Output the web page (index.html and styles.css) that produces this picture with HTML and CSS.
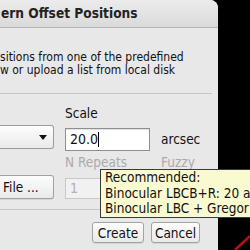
FILE: index.html
```html
<!DOCTYPE html>
<html lang="en">
  <head>
    <meta charset="UTF-8" />
    <title>Pattern Offset Positions</title>
    <link rel="stylesheet" href="styles.css">
  </head>
  <body>
    <div class="dialog">
      <div class="titlebar">ern Offset Positions</div>

      <p class="intro">sitions from one of the predefined<br>w or upload a list from local disk</p>
      <div class="sep"></div>

      <div class="form">
        <span></span>
        <label class="lbl">Scale</label>
        <span></span>

        <div class="combo">
          <svg class="arrow" width="8" height="5" viewBox="0 0 8 5"><polygon points="0,0 8,0 4,5" fill="#111"/></svg>
        </div>
        <div class="field">20.0<span class="caret"></span></div>
        <span class="unit">arcsec</span>

        <span></span>
        <label class="lbl off">N Repeats</label>
        <label class="lbl off">Fuzzy</label>

        <button class="btn file">File ...</button>
        <div class="field disabled">1</div>
        <span></span>
      </div>

      <div class="sep low"></div>

      <div class="actions">
        <button class="btn">Create</button>
        <button class="btn">Cancel</button>
      </div>

      <div class="tooltip">
        Recommended:<br>
        Binocular LBCB+R: 20 a<br>
        Binocular LBC + Gregor
      </div>
    </div>

    <svg class="cable" width="20" height="20" viewBox="0 0 20 20"><line x1="20" y1="6" x2="5" y2="20" stroke="#b3121c" stroke-width="2.5"/></svg>
  </body>
</html>
```

FILE: styles.css
```css
* {
  box-sizing: border-box;
  font-family: "DejaVu Sans Condensed", "DejaVu Sans", sans-serif;
  font-stretch: condensed;
}
body {
  margin: 0;
  width: 250px;
  height: 250px;
  overflow: hidden;
  background: #000;
  position: relative;
}
.dialog {
  position: relative;
  width: 218px;
  height: 250px;
  background: #e8e8e8;
  border-top-right-radius: 8px;
  color: #111;
}
.titlebar {
  height: 28px;
  line-height: 27px;
  padding-left: 1px;
  font-size: 13.6px;
  font-weight: bold;
  color: #222;
  background: linear-gradient(#ececec, #dadada);
  border-bottom: 1px solid #b4b4b4;
  border-top-right-radius: 8px;
}
.intro {
  margin: 0;
  padding-top: 23px;
  font-size: 12px;
  line-height: 13px;
  white-space: nowrap;
}
.sep {
  height: 1px;
  width: 212px;
  margin-top: 16px;
  background: #c6c6c6;
}
.sep.low {
  margin-top: 10px;
}
.form {
  display: grid;
  grid-template-columns: 54px 85px 1fr;
  grid-template-rows: 16px 26px 16px 24px;
  column-gap: 11px;
  row-gap: 4px;
  padding-top: 11px;
  font-size: 13.5px;
}
.lbl {
  line-height: 16px;
  white-space: nowrap;
}
.lbl.off {
  color: #ababab;
  line-height: 14px;
}
.combo {
  height: 24px;
  align-self: start;
  display: flex;
  align-items: center;
  justify-content: flex-end;
  padding-right: 6px;
  background: linear-gradient(#fefefe, #e9e9e9);
  border: 1px solid #9c9c9c;
  border-left: 0;
  border-radius: 0 3px 3px 0;
}
.field {
  height: 23px;
  align-self: end;
  padding-left: 4px;
  font-size: 14px;
  line-height: 21px;
  background: #fff;
  border: 1px solid #8f8f8f;
  box-shadow: inset 0 1px 1px rgba(0,0,0,0.12);
}
.caret {
  display: inline-block;
  width: 1px;
  height: 15px;
  background: #000;
  vertical-align: -3px;
}
.field.disabled {
  height: 21px;
  line-height: 19px;
  color: #b2b2b2;
  background: #f1f1f1;
  border-color: #c9c9c9;
  box-shadow: none;
}
.unit {
  align-self: center;
  line-height: 16px;
  padding-top: 2px;
}
.btn {
  height: 21px;
  padding: 0;
  font-size: 13.5px;
  color: #111;
  background: linear-gradient(#fdfdfd, #e9e9e9);
  border: 1px solid #a2a2a2;
  border-radius: 3px;
  box-shadow: 0 1px 0 rgba(0,0,0,0.08);
}
.btn.file {
  height: 24px;
  text-align: left;
  padding-left: 3px;
  border-left: 0;
  border-radius: 0 3px 3px 0;
}
.actions {
  display: flex;
  justify-content: flex-end;
  gap: 7px;
  margin-top: 12px;
  padding-right: 18px;
}
.actions .btn:first-child {
  width: 52px;
}
.actions .btn:last-child {
  width: 49px;
}
.tooltip {
  position: absolute;
  left: 100px;
  top: 169px;
  width: 150px;
  overflow: hidden;
  padding: 0 0 0 4px;
  border-right: 0;
  font-size: 13.5px;
  line-height: 15.5px;
  white-space: nowrap;
  color: #111;
  background: #fafad0;
  border: 1px solid #3a3a3a;
  border-right: 0;
}
.cable {
  position: absolute;
  right: 0;
  bottom: 0;
}
```
